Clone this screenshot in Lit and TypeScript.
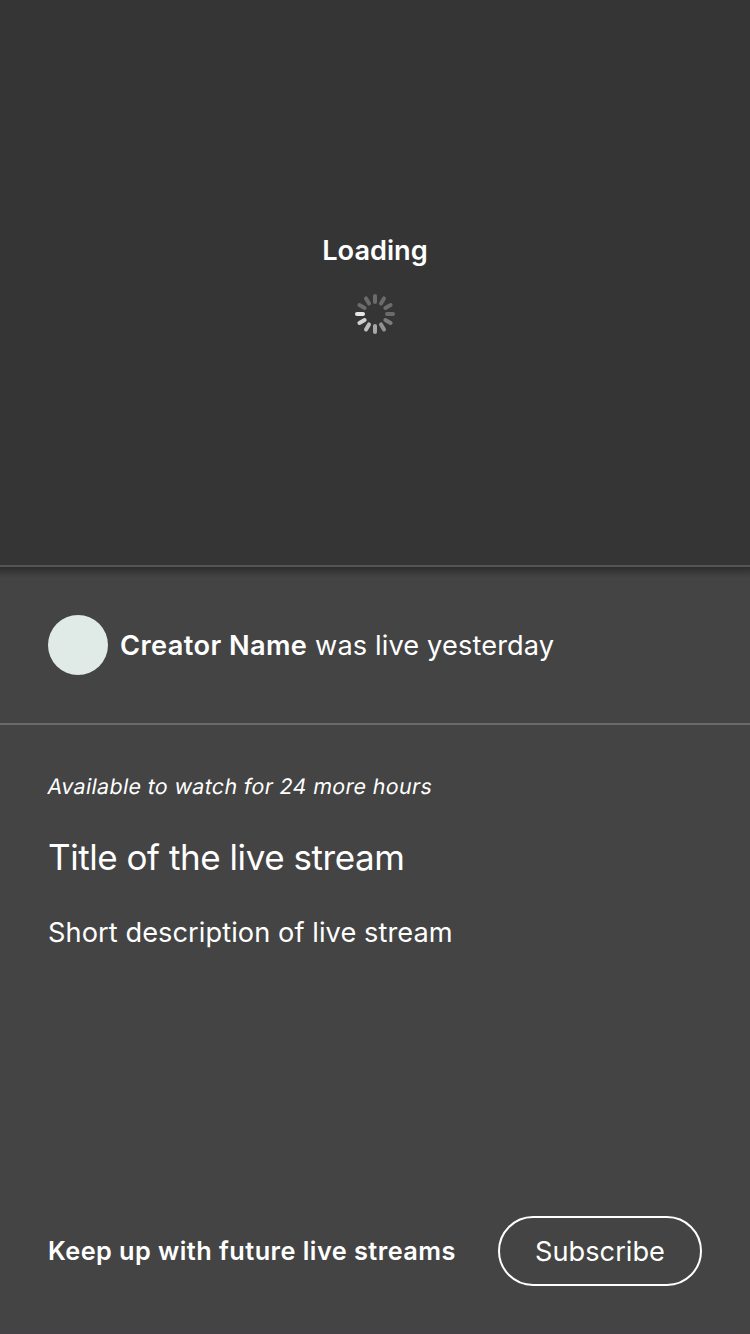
import { LitElement, html, css, svg } from "lit";
import { customElement } from "lit/decorators.js";

const SPOKES = ["#6b6b6b", "#6b6b6b", "#6b6b6b", "#6b6b6b", "#7c7c7c", "#929292", "#a8a8a8", "#bebebe", "#d2d2d2", "#e6e6e6", "#6b6b6b", "#6b6b6b"];

@customElement("activity-spinner")
export class ActivitySpinner extends LitElement {
  static styles = css`
    :host { display: block; width: 40px; height: 40px; }
    .wheel { display: block; }
  `;

  render() {
    return html`<svg class="wheel" width="40" height="40" viewBox="0 0 40 40">
      ${SPOKES.map((color, i) => svg`<rect x="18" y="0" width="4" height="10" rx="2" fill=${color} transform=${`rotate(${i * 30} 20 20)`}></rect>`)}
    </svg>`;
  }
}

@customElement("app-root")
export class AppRoot extends LitElement {
  static styles = css`
    :host {
      display: flex;
      flex-direction: column;
      box-sizing: border-box;
      width: 750px;
      height: 1334px;
      background: #444444;
      border-bottom: 1px solid #4a4147;
      color: #fff;
      font-family: Inter, "Liberation Sans", sans-serif;
      font-size: 27.2px;
      line-height: 34px;
      white-space: nowrap;
    }
    .player {
      box-sizing: border-box;
      height: 567px;
      padding-top: 234px;
      display: flex;
      flex-direction: column;
      align-items: center;
      gap: 26px;
      background: #353535;
      border-bottom: 2px solid #555555;
    }
    .loading { font-weight: 600; }
    .creator {
      box-sizing: border-box;
      height: 158px;
      padding: 0 48px;
      display: flex;
      align-items: center;
      gap: 12px;
      background: linear-gradient(#2d2d2d, #343434 3px, #3d3d3d 7px, #444444 11px);
      border-bottom: 2px solid #6b6b6b;
    }
    .avatar { width: 60px; height: 60px; border-radius: 50%; background: #e0eae6; }
    .headline { padding-top: 2px; }
    .name { font-weight: 600; letter-spacing: 0.4px; }
    .status { letter-spacing: 0.12px; }
    .details { flex: 1; padding: 47px 48px 0; }
    .availability {
      margin: 0;
      font-size: 21.4px;
      line-height: 28px;
      letter-spacing: 0.37px;
      transform: skewX(-10deg);
    }
    .title { margin: 35px 0 0; font-size: 35px; line-height: 44px; font-weight: 400; letter-spacing: -0.45px; }
    .description { margin: 37px 0 0; letter-spacing: 0.07px; }
    .footer {
      display: flex;
      align-items: center;
      justify-content: space-between;
      padding: 0 48px 47px;
    }
    .prompt { padding-bottom: 1px; font-size: 25.3px; font-weight: 600; letter-spacing: 0.45px; }
    .subscribe {
      box-sizing: border-box;
      width: 204px;
      height: 70px;
      padding: 1px 0 0;
      border: 2px solid #fff;
      border-radius: 35px;
      background: none;
      color: inherit;
      font: inherit;
      letter-spacing: 0;
    }
  `;

  render() {
    return html`
      <section class="player">
        <div class="loading">Loading</div>
        <activity-spinner></activity-spinner>
      </section>
      <section class="creator">
        <div class="avatar"></div>
        <div class="headline"><span class="name">Creator Name</span><span class="status"> was live yesterday</span></div>
      </section>
      <main class="details">
        <p class="availability">Available to watch for 24 more hours</p>
        <h1 class="title">Title of the live stream</h1>
        <p class="description">Short description of live stream</p>
      </main>
      <footer class="footer">
        <span class="prompt">Keep up with future live streams</span>
        <button class="subscribe">Subscribe</button>
      </footer>
    `;
  }
}
